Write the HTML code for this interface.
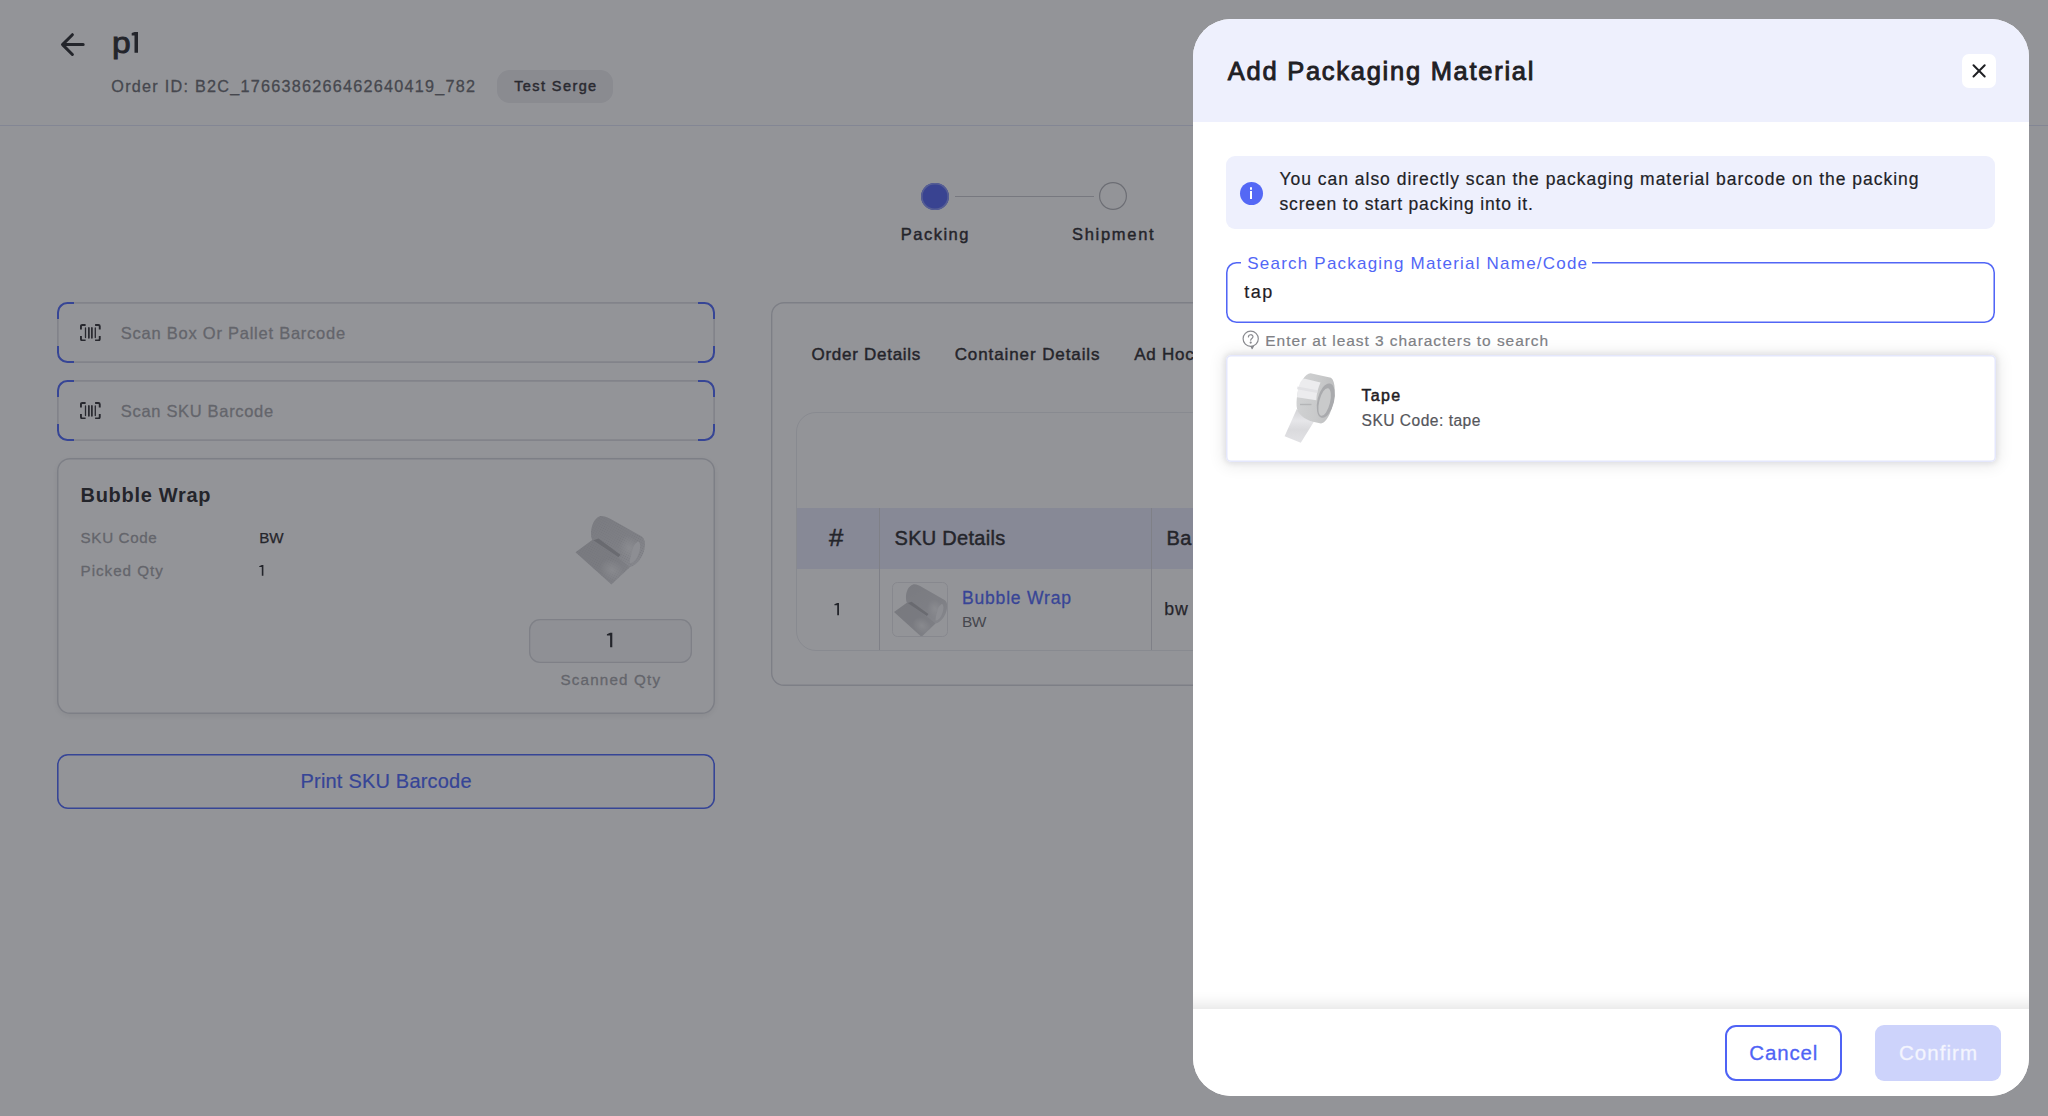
<!DOCTYPE html>
<html><head><meta charset="utf-8"><title>Packing</title>
<style>
html,body{margin:0;padding:0;}
body{width:2048px;height:1116px;overflow:hidden;position:relative;background:#fff;font-family:"Liberation Sans", sans-serif;}
.t{position:absolute;white-space:nowrap;}
.abs{position:absolute;box-sizing:border-box;}

.scan{box-shadow:inset 0 0 0 1.7px #dcdde2;border-radius:10.5px;}
.corner{position:absolute;width:17px;height:17px;border:2px solid #4560fa;box-sizing:border-box;}
.c-tl{left:0;top:0;border-right:none;border-bottom:none;border-top-left-radius:10.5px;}
.c-tr{right:0;top:0;border-left:none;border-bottom:none;border-top-right-radius:10.5px;}
.c-bl{left:0;bottom:0;border-right:none;border-top:none;border-bottom-left-radius:10.5px;}
.c-br{right:0;bottom:0;border-left:none;border-top:none;border-bottom-right-radius:10.5px;}


#modal{left:1192.5px;top:19.0px;width:836.0px;height:1077.2px;background:#fff;border-radius:38px;overflow:hidden;}

</style></head>
<body>
<div id="page" class="abs" style="left:0;top:0;width:2048px;height:1116px;">
<svg class="abs" style="left:59px;top:32px" width="27" height="25" viewBox="0 0 27 25" fill="none" stroke="#1f2024" stroke-width="3" stroke-linecap="round" stroke-linejoin="round"><path d="M24.2 12.6H3.5M13.4 2.700L3.5 12.600l9.900 9.900"/></svg>
<div class="t" style="left:112.00px;top:22.80px;font-size:30px;line-height:39px;color:#1f2024;letter-spacing:0.0px;font-weight:400;-webkit-text-stroke:0.9px #1f2024;transform:scaleX(1.12);transform-origin:left;">p</div>
<svg class="abs" style="left:130px;top:30px" width="10" height="25" viewBox="130 30 10 25"><path d="M131.7 33.1 L134.6 32 H138 V52.8 H134.5 V35.4 H131.7 Z" fill="#1f2024"/></svg>
<div class="t" style="left:111.30px;top:75.70px;font-size:16.2px;line-height:21px;color:#64656a;letter-spacing:1.255px;font-weight:400;-webkit-text-stroke:0.3px #64656a;">Order ID: B2C_1766386266462640419_782</div>
<div class="abs" style="left:497px;top:69.5px;width:116px;height:33px;border-radius:12.5px;background:#ececef;"></div>
<div class="t" style="left:514.20px;top:76.50px;font-size:14.5px;line-height:19px;color:#2c2a2f;letter-spacing:1.408px;font-weight:400;-webkit-text-stroke:0.45px #2c2a2f;">Test Serge</div>
<div class="abs" style="left:0;top:125.1px;width:2048px;height:1.2px;background:#dfe2f6;"></div>
<div class="abs" style="left:921.4px;top:182.6px;width:27.4px;height:27.4px;border-radius:50%;background:#4a5df0;box-shadow:inset 0 0 0 1.6px #8492f6;"></div>
<div class="abs" style="left:954.5px;top:196.3px;width:139.5px;height:1.2px;background:#c6c7cc;"></div>
<div class="abs" style="left:1099.2px;top:182.4px;width:27.8px;height:27.8px;border-radius:50%;box-shadow:inset 0 0 0 1.2px #b0b1b6;background:#fff;"></div>
<div class="t" style="left:900.70px;top:223.80px;font-size:16.5px;line-height:21px;color:#1f2024;letter-spacing:1.516px;font-weight:400;-webkit-text-stroke:0.45px #1f2024;">Packing</div>
<div class="t" style="left:1072.00px;top:223.80px;font-size:16.5px;line-height:21px;color:#1f2024;letter-spacing:1.712px;font-weight:400;-webkit-text-stroke:0.45px #1f2024;">Shipment</div>
<div class="abs scan" style="left:57px;top:302.2px;width:658px;height:60.5px;"><i class="corner c-tl"></i><i class="corner c-tr"></i><i class="corner c-bl"></i><i class="corner c-br"></i></div>
<svg class="abs" style="left:80.1px;top:324.09999999999997px" width="20.7" height="17.3" viewBox="0 0 20.7 17.3" fill="none" stroke="#27262b" stroke-width="1.9" stroke-linecap="butt">
<path d="M5.6 0.95H2.3Q0.95 0.95 0.95 2.3V5.4M15.1 0.95h3.3q1.35 0 1.35 1.35V5.4M0.95 11.9v3.1q0 1.35 1.35 1.35H5.6M19.75 11.9v3.1q0 1.35-1.35 1.35H15.1"/>
<path d="M5.5 4v9.6" stroke-width="1.3" stroke-linecap="round"/><path d="M8.900 3.900v9.9M11.9 3.900v9.9" stroke-width="1.7" stroke-linecap="round"/><path d="M15.3 4v9.600" stroke-width="1.3" stroke-linecap="round"/>
</svg>
<div class="t" style="left:120.80px;top:322.80px;font-size:16.5px;line-height:21px;color:#9fa0a5;letter-spacing:0.756px;font-weight:400;-webkit-text-stroke:0.3px #9fa0a5;">Scan Box Or Pallet Barcode</div>
<div class="abs scan" style="left:57px;top:380.3px;width:658px;height:60.5px;"><i class="corner c-tl"></i><i class="corner c-tr"></i><i class="corner c-bl"></i><i class="corner c-br"></i></div>
<svg class="abs" style="left:80.1px;top:402.2px" width="20.7" height="17.3" viewBox="0 0 20.7 17.3" fill="none" stroke="#27262b" stroke-width="1.9" stroke-linecap="butt">
<path d="M5.6 0.95H2.3Q0.95 0.95 0.95 2.3V5.4M15.1 0.95h3.3q1.35 0 1.35 1.35V5.4M0.95 11.9v3.1q0 1.35 1.35 1.35H5.6M19.75 11.9v3.1q0 1.35-1.35 1.35H15.1"/>
<path d="M5.5 4v9.6" stroke-width="1.3" stroke-linecap="round"/><path d="M8.900 3.900v9.9M11.9 3.900v9.9" stroke-width="1.7" stroke-linecap="round"/><path d="M15.3 4v9.600" stroke-width="1.3" stroke-linecap="round"/>
</svg>
<div class="t" style="left:120.80px;top:400.90px;font-size:16.5px;line-height:21px;color:#9fa0a5;letter-spacing:0.679px;font-weight:400;-webkit-text-stroke:0.3px #9fa0a5;">Scan SKU Barcode</div>
<div class="abs" style="left:57px;top:458px;width:657.8px;height:256px;border-radius:13px;box-shadow:inset 0 0 0 1.5px #d3d4da,0 2px 6px rgba(0,0,0,0.08);"></div>
<div class="t" style="left:80.50px;top:482.20px;font-size:20px;line-height:26px;color:#1f2024;letter-spacing:0.7px;font-weight:700;">Bubble Wrap</div>
<div class="t" style="left:80.60px;top:527.60px;font-size:15.2px;line-height:20px;color:#9fa0a5;letter-spacing:0.636px;font-weight:400;-webkit-text-stroke:0.3px #9fa0a5;">SKU Code</div>
<div class="t" style="left:259.30px;top:527.60px;font-size:15.2px;line-height:20px;color:#1f2024;letter-spacing:-0.199px;font-weight:400;-webkit-text-stroke:0.25px #1f2024;">BW</div>
<div class="t" style="left:80.60px;top:560.80px;font-size:15.2px;line-height:20px;color:#9fa0a5;letter-spacing:0.976px;font-weight:400;-webkit-text-stroke:0.3px #9fa0a5;">Picked Qty</div>
<svg class="abs" style="left:0;top:0;overflow:visible" width="1" height="1"><path d="M259.20 566.16 L261.80 565.00 H263.40 V575.70 H261.80 V567.10 H259.20 Z" fill="#1f2024"/></svg>
<svg class="abs" style="left:565px;top:505px" width="90" height="90" viewBox="0 0 90 90"><defs>
<linearGradient id="bwr" x1="0.2" y1="0" x2="0.8" y2="1"><stop offset="0" stop-color="#cfcfd2"/><stop offset="0.55" stop-color="#d6d6d9"/><stop offset="1" stop-color="#e6e6e9"/></linearGradient>
<linearGradient id="bws" x1="0" y1="0" x2="1" y2="1"><stop offset="0" stop-color="#cbcbce"/><stop offset="0.5" stop-color="#cdcdd0"/><stop offset="1" stop-color="#dcdcdf"/></linearGradient>
<pattern id="bwd" width="2.2" height="2.2" patternUnits="userSpaceOnUse" patternTransform="rotate(30)"><circle cx="1.1" cy="1.1" r="0.55" fill="#b9b9bd" fill-opacity="0.55"/></pattern>
<radialGradient id="bwl"><stop offset="0" stop-color="#fff" stop-opacity="0.55"/><stop offset="1" stop-color="#fff" stop-opacity="0"/></radialGradient>
</defs><path d="M10.5 47.2 L28.2 34.2 L62 55.400 L64.8 62.300 L46.400 79.600 Z" fill="url(#bws)"/>
<path d="M10.5 47.2 L28.2 34.2 L62 55.400 L64.8 62.300 L46.400 79.600 Z" fill="url(#bwd)"/>
<path d="M28.5 34.5 L35 33 L56 48.500 L60.500 55 Z" fill="#b2b2b6"/>
<path d="M35.5 11 C40 10.500 44 13 48 15.200 L76 31 C80.500 33.500 80.500 39 79.500 44 C78 52 72 60.500 64.800 62.300 C60 58 54 53 48 49 L27 34.500 C24.500 27 27 13.500 35.500 11 Z" fill="url(#bwr)"/>
<path d="M35.5 11 C40 10.500 44 13 48 15.200 L76 31 C80.500 33.500 80.500 39 79.500 44 C78 52 72 60.500 64.800 62.300 C60 58 54 53 48 49 L27 34.500 C24.500 27 27 13.500 35.500 11 Z" fill="url(#bwd)"/>
<path d="M28.3 35.3 L33.5 33.6 L55.5 49.7 L53.5 52.3 Z" fill="#a4a4a8" fill-opacity="0.85"/>
<ellipse cx="64" cy="43" rx="10" ry="13" transform="rotate(-20 64 43)" fill="url(#bwl)"/>
<ellipse cx="47" cy="65" rx="13" ry="10" transform="rotate(35 47 65)" fill="url(#bwl)"/>
<path d="M73.5 36.5 C76.5 39 75 47 72 52.500 C70 56 67 58.500 64.800 58 C65 52 67 48.500 67.500 44.500 C68.500 41 71 37 73.500 36.500 Z" fill="#f3f3f5"/></svg>
<div class="abs" style="left:529px;top:618.8px;width:162.7px;height:44px;box-shadow:inset 0 0 0 1.3px #d6d7dc;border-radius:11px;background:#f6f6f8;"></div>
<svg class="abs" style="left:0;top:0;overflow:visible" width="1" height="1"><path d="M606.90 634.17 L610.10 632.80 H612.30 V647.30 H610.10 V635.50 H606.90 Z" fill="#1f2024"/></svg>
<div class="t" style="left:560.50px;top:669.80px;font-size:15.2px;line-height:20px;color:#9fa0a5;letter-spacing:1.171px;font-weight:400;-webkit-text-stroke:0.3px #9fa0a5;">Scanned Qty</div>
<div class="abs" style="left:57px;top:754px;width:658px;height:55px;box-shadow:inset 0 0 0 1.6px #4560fa;border-radius:11px;"></div>
<div class="t" style="left:300.50px;top:768.00px;font-size:20px;line-height:26px;color:#4560fa;letter-spacing:0.2px;font-weight:400;-webkit-text-stroke:0.2px #4560fa;">Print SKU Barcode</div>
<div class="abs" style="left:770.5px;top:302px;width:700px;height:384px;box-shadow:inset 0 0 0 1.4px #d3d4da;border-radius:13px;"></div>
<div class="t" style="left:811.50px;top:344.30px;font-size:17px;line-height:22px;color:#1f2024;letter-spacing:0.726px;font-weight:400;-webkit-text-stroke:0.45px #1f2024;">Order Details</div>
<div class="t" style="left:954.70px;top:344.30px;font-size:17px;line-height:22px;color:#1f2024;letter-spacing:0.903px;font-weight:400;-webkit-text-stroke:0.45px #1f2024;">Container Details</div>
<div class="t" style="left:1134.20px;top:344.30px;font-size:17px;line-height:22px;color:#1f2024;letter-spacing:0.75px;font-weight:400;-webkit-text-stroke:0.45px #1f2024;">Ad Hoc Usage</div>
<div class="abs" style="left:795.5px;top:412px;width:660px;height:238.5px;border:1px solid #e9eaee;border-radius:20px;overflow:hidden;"><div class="abs" style="left:0;top:94.5px;width:660px;height:61px;background:#e6e9fb;"></div><div class="abs" style="left:82.5px;top:94.5px;width:1px;height:146px;background:#d6d7dd;"></div><div class="abs" style="left:354.7px;top:94.5px;width:1px;height:146px;background:#d6d7dd;"></div></div>
<div class="t" style="left:829.30px;top:523.00px;font-size:23px;line-height:30px;color:#1f2024;letter-spacing:0.0px;font-weight:400;-webkit-text-stroke:0.5px #1f2024;transform:scaleX(1.12);transform-origin:left;">#</div>
<div class="t" style="left:894.50px;top:525.30px;font-size:20px;line-height:26px;color:#1f2024;letter-spacing:0.294px;font-weight:400;-webkit-text-stroke:0.45px #1f2024;">SKU Details</div>
<div class="t" style="left:1166.50px;top:525.30px;font-size:20px;line-height:26px;color:#1f2024;letter-spacing:0.5px;font-weight:400;-webkit-text-stroke:0.45px #1f2024;">Ba</div>
<svg class="abs" style="left:0;top:0;overflow:visible" width="1" height="1"><path d="M834.40 604.13 L837.20 602.90 H839.00 V615.20 H837.20 V605.20 H834.40 Z" fill="#1f2024"/></svg>
<div class="abs" style="left:892.2px;top:582px;width:55.8px;height:55.3px;border:1px solid #e6e6ea;border-radius:5.5px;background:#fff;overflow:hidden;"><svg class="abs" style="left:-7.300px;top:-7.400px" width="68.8" height="68.8" viewBox="0 0 90 90"><path d="M10.5 47.2 L28.2 34.2 L62 55.400 L64.8 62.300 L46.400 79.600 Z" fill="url(#bws)"/>
<path d="M10.5 47.2 L28.2 34.2 L62 55.400 L64.8 62.300 L46.400 79.600 Z" fill="url(#bwd)"/>
<path d="M28.5 34.5 L35 33 L56 48.500 L60.500 55 Z" fill="#b2b2b6"/>
<path d="M35.5 11 C40 10.500 44 13 48 15.200 L76 31 C80.500 33.500 80.500 39 79.500 44 C78 52 72 60.500 64.800 62.300 C60 58 54 53 48 49 L27 34.500 C24.500 27 27 13.500 35.500 11 Z" fill="url(#bwr)"/>
<path d="M35.5 11 C40 10.500 44 13 48 15.200 L76 31 C80.500 33.500 80.500 39 79.500 44 C78 52 72 60.500 64.800 62.300 C60 58 54 53 48 49 L27 34.500 C24.500 27 27 13.500 35.500 11 Z" fill="url(#bwd)"/>
<path d="M28.3 35.3 L33.5 33.6 L55.5 49.7 L53.5 52.3 Z" fill="#a4a4a8" fill-opacity="0.85"/>
<ellipse cx="64" cy="43" rx="10" ry="13" transform="rotate(-20 64 43)" fill="url(#bwl)"/>
<ellipse cx="47" cy="65" rx="13" ry="10" transform="rotate(35 47 65)" fill="url(#bwl)"/>
<path d="M73.5 36.5 C76.5 39 75 47 72 52.500 C70 56 67 58.500 64.800 58 C65 52 67 48.500 67.500 44.500 C68.500 41 71 37 73.500 36.500 Z" fill="#f3f3f5"/></svg></div>
<div class="t" style="left:962.00px;top:587.40px;font-size:17.5px;line-height:23px;color:#4860fa;letter-spacing:0.819px;font-weight:400;-webkit-text-stroke:0.3px #4860fa;">Bubble Wrap</div>
<div class="t" style="left:962.00px;top:612.30px;font-size:15.5px;line-height:20px;color:#64656a;letter-spacing:-0.6px;font-weight:400;">BW</div>
<div class="t" style="left:1164.20px;top:598.20px;font-size:17.8px;line-height:23px;color:#1f2024;letter-spacing:1.0px;font-weight:400;-webkit-text-stroke:0.25px #1f2024;">bw</div>

</div>
<div id="overlay" class="abs" style="left:0;top:0;width:2048px;height:1116px;background:rgba(40,42,50,0.5);"></div>
<div id="modal" class="abs">
<div class="abs" style="left:0.00px;top:0.00px;width:836.0px;height:103.3px;background:#eef0fd;"></div>
<div class="t" style="left:35.30px;top:35.65px;font-size:25.5px;line-height:33px;color:#1f2024;letter-spacing:1.73px;font-weight:400;-webkit-text-stroke:0.9px #1f2024;">Add Packaging Material</div>
<div class="abs" style="left:769.00px;top:35.00px;width:34px;height:34px;background:#fff;border-radius:7px;"><svg class="abs" style="left:8px;top:8px" width="18" height="18" viewBox="0 0 18 18" fill="none" stroke="#1f2024" stroke-width="2" stroke-linecap="round"><path d="M3.5 3.300l11.200 11.200M14.700 3.300L3.500 14.500"/></svg></div>
<div class="abs" style="left:33.50px;top:137.00px;width:769.3px;height:72.5px;background:#eef0fd;border-radius:9px;"></div>
<div class="abs" style="left:47.20px;top:163.20px;width:23px;height:23px;background:#5468f5;border-radius:50%;"><div class="abs" style="left:10.2px;top:5.2px;width:2.6px;height:2.6px;border-radius:50%;background:#fff"></div><div class="abs" style="left:10.4px;top:9.300px;width:2.2px;height:8px;background:#fff"></div></div>
<div class="t" style="left:87.00px;top:149.00px;font-size:17.5px;line-height:23px;color:#212226;letter-spacing:0.98px;font-weight:400;-webkit-text-stroke:0.2px #212226;">You can also directly scan the packaging material barcode on the packing</div>
<div class="t" style="left:87.00px;top:174.00px;font-size:17.5px;line-height:23px;color:#212226;letter-spacing:0.83px;font-weight:400;-webkit-text-stroke:0.2px #212226;">screen to start packing into it.</div>
<div class="abs" style="left:33.50px;top:242.80px;width:769.3px;height:60.8px;box-shadow:inset 0 0 0 1.55px #5266f6;border-radius:10.5px;"></div>
<div class="abs" style="left:48.70px;top:239.00px;width:350.8px;height:10px;background:#fff;"></div>
<div class="t" style="left:54.80px;top:233.90px;font-size:17px;line-height:22px;color:#5266f6;letter-spacing:1.209px;font-weight:400;">Search Packaging Material Name/Code</div>
<div class="t" style="left:51.80px;top:261.90px;font-size:18px;line-height:23px;color:#1f2024;letter-spacing:1.484px;font-weight:400;-webkit-text-stroke:0.2px #1f2024;">tap</div>
<svg class="abs" style="left:49.80px;top:311.30px" width="18" height="20" viewBox="0 0 18 20" fill="none" stroke="#8a8b90" stroke-width="1.2"><circle cx="8.7" cy="8.7" r="7.600"/><path d="M11.600 15.700 L10.200 18.600 L9.000 16.300" stroke-linejoin="round" fill="#8a8b90"/><path d="M6.4 7.000c0-3 4.600-3 4.600-0.200 0 1.700-2.300 1.700-2.300 3.400" stroke-linecap="round"/><circle cx="8.7" cy="12.600" r="0.500" fill="#8a8b90"/></svg>
<div class="t" style="left:72.80px;top:311.70px;font-size:15.5px;line-height:20px;color:#808186;letter-spacing:0.941px;font-weight:400;-webkit-text-stroke:0.2px #808186;">Enter at least 3 characters to search</div>
<div class="abs" style="left:33.50px;top:335.50px;width:769.5px;height:107px;background:#fff;border-radius:5px;box-shadow:inset 0 0 0 1.5px #e4e7fc,0 0 5px 2px rgba(20,20,30,0.075),0 1px 15px 4px rgba(20,20,30,0.075);"></div>
<svg class="abs" style="left:77.50px;top:343.00px" width="80" height="90" viewBox="0 0 80 90"><defs><linearGradient id="tpb" x1="0" y1="0" x2="1" y2="0.15"><stop offset="0" stop-color="#d2d3d4"/><stop offset="0.6" stop-color="#c9cacb"/><stop offset="1" stop-color="#bfc0c1"/></linearGradient><linearGradient id="tpt" x1="0" y1="0" x2="0" y2="1"><stop offset="0" stop-color="#d3d3d6"/><stop offset="0.35" stop-color="#e6e6e9"/><stop offset="0.6" stop-color="#dadadd"/><stop offset="1" stop-color="#e2e2e5"/></linearGradient></defs><path d="M26.8 47 L14.6 74.2 L30.8 80.8 L44 59.5 L30 50 Z" fill="url(#tpt)"/><path d="M40.5 11.3 L61 15.8 C66 19.500 65.500 33 62 45.500 C59 55.500 55 61 51 61.500 L43 59.800 C34 57 27 52 26.600 44 C26.300 34 28.500 24 32.500 18 C35 13.500 38 11.300 40.500 11.300 Z" fill="url(#tpb)"/><path d="M30.2 20.5 C32 17.500 33.500 16.500 35 16.800 L50.500 20.500 C48 26 46.500 31.500 46.300 38.200 L26.900 35.200 C27.500 29.500 28.500 24.500 30.200 20.500 Z" fill="#ececee"/><path d="M27.5 24.5 L47.6 28.2 L47.2 31 L27.2 27.2 Z" fill="#e2e2e5"/><ellipse cx="55.8" cy="38.6" rx="8.3" ry="17.6" transform="rotate(14 55.8 38.6)" fill="#a9aaad"/><ellipse cx="54.6" cy="40" rx="5.4" ry="14.2" transform="rotate(14 54.600 40)" fill="#c9cacb"/><path d="M30 42.5h11.500" stroke="#b4b5b7" stroke-width="1.4" fill="none"/></svg>
<div class="t" style="left:169.00px;top:365.90px;font-size:16px;line-height:21px;color:#1f2024;letter-spacing:1.35px;font-weight:400;-webkit-text-stroke:0.5px #1f2024;">Tape</div>
<div class="t" style="left:169.00px;top:392.00px;font-size:15.6px;line-height:20px;color:#55565b;letter-spacing:0.481px;font-weight:400;-webkit-text-stroke:0.2px #55565b;">SKU Code: tape</div>
<div class="abs" style="left:-40.00px;top:990.00px;width:916.0px;height:90px;background:#fff;box-shadow:0 -5px 13px rgba(0,0,0,0.10);"></div>
<div class="abs" style="left:532.00px;top:1006.00px;width:117.5px;height:56px;border:2px solid #4f63f5;border-radius:11px;background:#fff;"></div>
<div class="t" style="left:556.80px;top:1019.60px;font-size:20.5px;line-height:27px;color:#4f63f5;letter-spacing:0.84px;font-weight:400;-webkit-text-stroke:0.3px #4f63f5;">Cancel</div>
<div class="abs" style="left:682.80px;top:1006.30px;width:126px;height:55.7px;background:#cdd3fb;border-radius:9px;"></div>
<div class="t" style="left:706.50px;top:1019.60px;font-size:20.5px;line-height:27px;color:#f4f5fe;letter-spacing:1.04px;font-weight:400;-webkit-text-stroke:0.3px #f4f5fe;">Confirm</div>
</div>

</body></html>
